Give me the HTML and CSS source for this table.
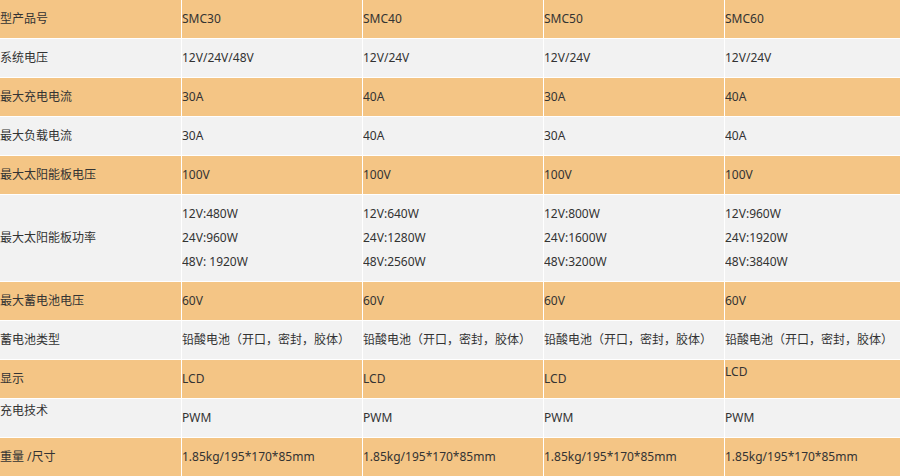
FILE: index.html
```html
<!DOCTYPE html>
<html lang="zh-CN">
<head>
<meta charset="utf-8">
<title>SMC 参数表</title>
<link rel="stylesheet" href="styles.css">
</head>
<body>
<table class="spec">
  <colgroup>
    <col class="c1"><col class="c2"><col class="c2"><col class="c2"><col class="c5">
  </colgroup>
  <tbody>
    <tr class="orange">
      <td>型产品号</td><td>SMC30</td><td>SMC40</td><td>SMC50</td><td>SMC60</td>
    </tr>
    <tr class="gray">
      <td>系统电压</td><td>12V/24V/48V</td><td>12V/24V</td><td>12V/24V</td><td>12V/24V</td>
    </tr>
    <tr class="orange">
      <td>最大充电电流</td><td>30A</td><td>40A</td><td>30A</td><td>40A</td>
    </tr>
    <tr class="gray">
      <td>最大负载电流</td><td>30A</td><td>40A</td><td>30A</td><td>40A</td>
    </tr>
    <tr class="orange">
      <td>最大太阳能板电压</td><td>100V</td><td>100V</td><td>100V</td><td>100V</td>
    </tr>
    <tr class="gray tall">
      <td>最大太阳能板功率</td>
      <td><div class="ln">12V:480W</div><div class="ln">24V:960W</div><div class="ln">48V: 1920W</div></td>
      <td><div class="ln">12V:640W</div><div class="ln">24V:1280W</div><div class="ln">48V:2560W</div></td>
      <td><div class="ln">12V:800W</div><div class="ln">24V:1600W</div><div class="ln">48V:3200W</div></td>
      <td><div class="ln">12V:960W</div><div class="ln">24V:1920W</div><div class="ln">48V:3840W</div></td>
    </tr>
    <tr class="orange">
      <td>最大蓄电池电压</td><td>60V</td><td>60V</td><td>60V</td><td>60V</td>
    </tr>
    <tr class="gray">
      <td>蓄电池类型</td><td>铅酸电池（开口，密封，胶体）</td><td>铅酸电池（开口，密封，胶体）</td><td>铅酸电池（开口，密封，胶体）</td><td>铅酸电池（开口，密封，胶体）</td>
    </tr>
    <tr class="orange">
      <td>显示</td><td>LCD</td><td>LCD</td><td>LCD</td><td class="top">LCD</td>
    </tr>
    <tr class="gray">
      <td class="top">充电技术</td><td>PWM</td><td>PWM</td><td>PWM</td><td>PWM</td>
    </tr>
    <tr class="orange">
      <td>重量 /尺寸</td><td>1.85kg/195*170*85mm</td><td>1.85kg/195*170*85mm</td><td>1.85kg/195*170*85mm</td><td>1.85kg/195*170*85mm</td>
    </tr>
  </tbody>
</table>
</body>
</html>
```
FILE: styles.css
```css
html, body {
  margin: 0;
  padding: 0;
  background: #ffffff;
}

.spec {
  border-collapse: separate;
  border-spacing: 0;
  table-layout: fixed;
  width: 901px;
  font-family: "Noto Sans", "Noto Sans CJK SC", sans-serif;
  font-size: 12px;
  color: #333333;
}

.c1 { width: 182px; }
.c2 { width: 181px; }
.c5 { width: 176px; }

.spec td {
  height: 38px;
  padding: 0;
  border-right: 1px solid #ffffff;
  border-bottom: 1px solid #ffffff;
  vertical-align: middle;
  white-space: nowrap;
  overflow: hidden;
  line-height: 18px;
}

.spec tr.tall td {
  height: 86px;
}

.spec td.top {
  vertical-align: top;
  line-height: 24px;
}

.ln {
  line-height: 24px;
}

.orange td { background: #f4c585; }
.gray td { background: #f2f2f2; }
```
